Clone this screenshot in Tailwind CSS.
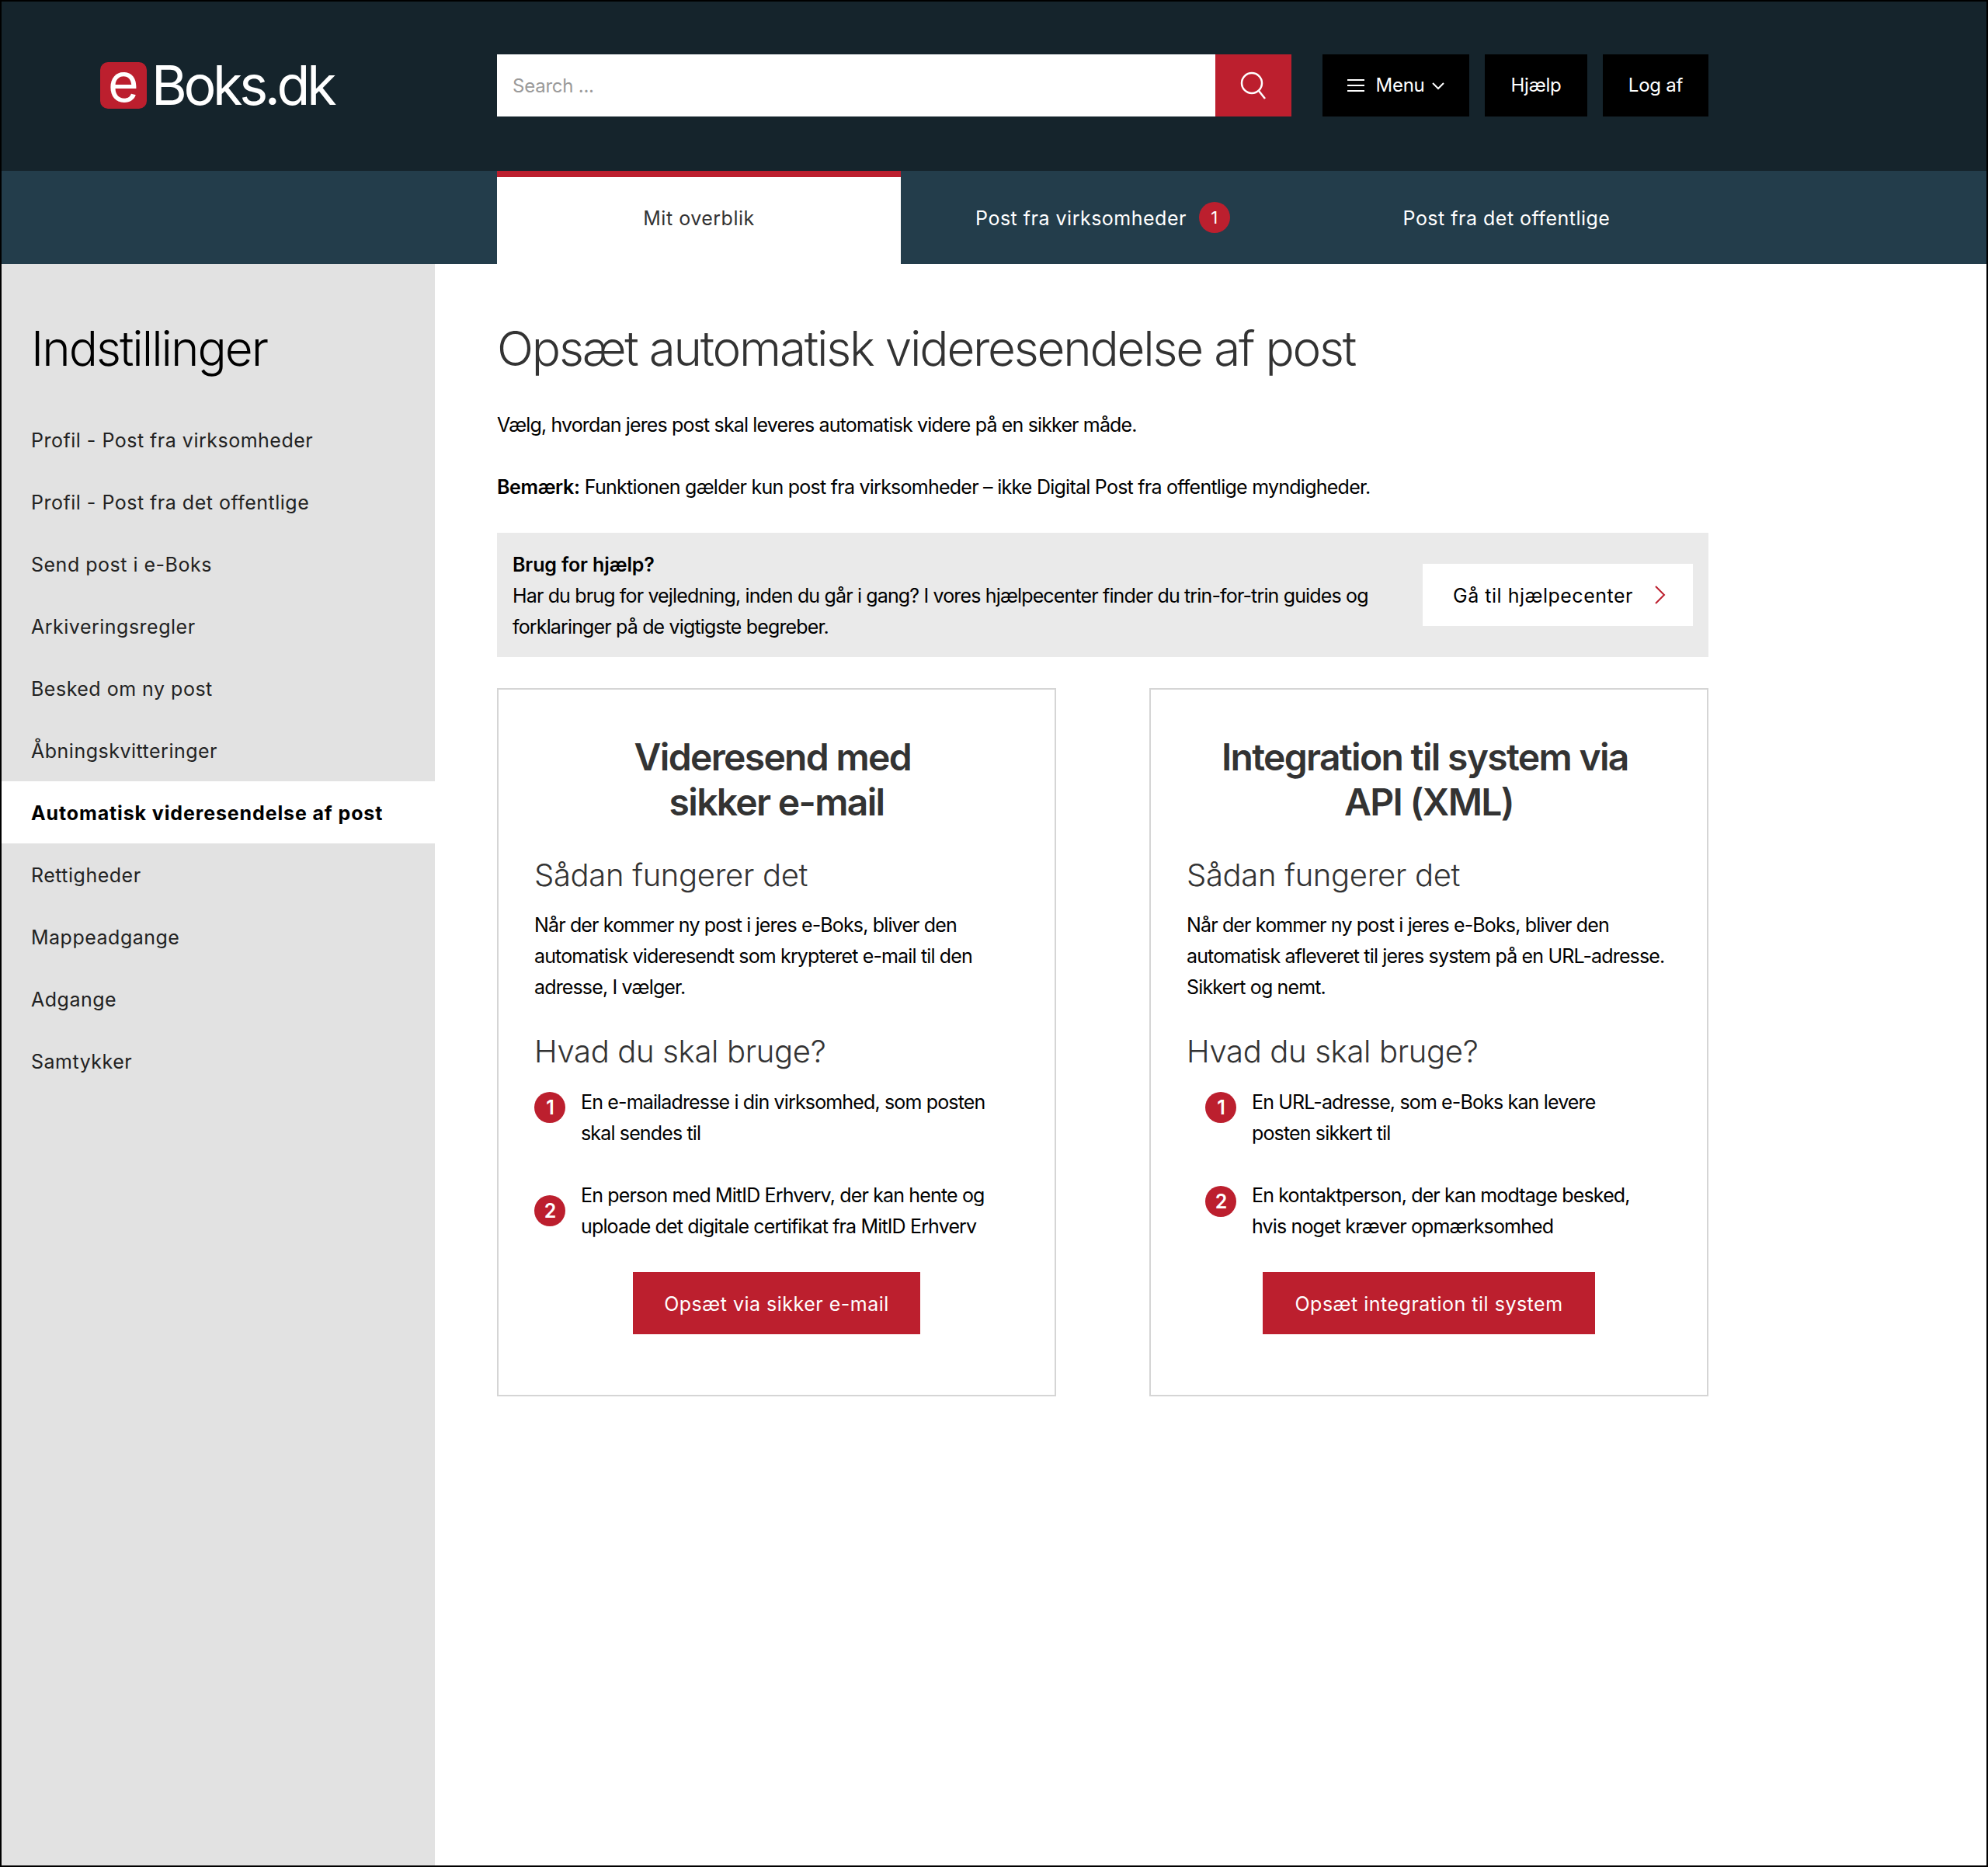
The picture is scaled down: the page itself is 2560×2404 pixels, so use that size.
<!DOCTYPE html>
<html lang="da">
<head>
  <meta charset="UTF-8" />
  <title>e-Boks.dk: Indstillinger</title>
  <script src="https://cdn.jsdelivr.net/npm/@tailwindcss/browser@4"></script>
</head>
<body class="font-[Inter,sans-serif] bg-white">
<div class="w-[2560px] h-[2404px] border-2 border-black flex flex-col overflow-hidden text-[25px] leading-[40px] tracking-[0.02em] text-black">

  <!-- Header -->
  <header class="h-[218px] shrink-0 bg-[#15242c] flex">
    <div class="w-[638px] shrink-0 pl-[127px] pt-[78px]">
      <div class="flex items-start">
        <div class="w-[60px] h-[60px] rounded-[10px] bg-[#bc1f2e] flex items-center justify-center text-white text-[68px] leading-[56px] font-normal pb-[8px]">e</div>
        <span class="ml-[6px] text-white text-[70px] leading-[60px] font-normal tracking-[-0.062em]">Boks.dk</span>
      </div>
    </div>
    <div class="pt-[68px] flex items-start h-[148px] text-[24px] tracking-[-0.01em]">
      <input type="text" placeholder="Search ..." class="w-[925px] h-[80px] bg-white px-[20px] text-[24px] placeholder:text-[#9a9a9a] outline-none">
      <button class="w-[98px] h-[80px] bg-[#bc1f2e] flex items-center justify-center">
        <svg width="34" height="36" viewBox="0 0 34 36" fill="none" stroke="white" stroke-width="2.5"><circle cx="15" cy="15" r="13"/><path d="M24 25l8 10"/></svg>
      </button>
      <button class="ml-[40px] w-[189px] h-[80px] bg-black text-white flex items-center justify-center">
        <svg width="22" height="16" viewBox="0 0 22 16" fill="none" stroke="white" stroke-width="2"><path d="M0 1h22M0 8h22M0 15h22"/></svg>
        <span class="ml-[14px]">Menu</span>
        <svg class="ml-[9px] mt-[2px]" width="16" height="10" viewBox="0 0 16 10" fill="none" stroke="white" stroke-width="2"><path d="M1 1l7 7 7-7"/></svg>
      </button>
      <button class="ml-[20px] w-[132px] h-[80px] bg-black text-white">Hjælp</button>
      <button class="ml-[20px] w-[136px] h-[80px] bg-black text-white">Log af</button>
    </div>
  </header>

  <!-- Tabs -->
  <nav class="h-[120px] shrink-0 bg-[#233d4b] flex pl-[638px] text-white">
    <a class="w-[520px] h-[120px] bg-white border-t-[8px] border-[#bc1f2e] text-[#333] flex items-center justify-center pb-[6px]">Mit overblik</a>
    <a class="w-[520px] flex items-center justify-center pt-[2px]">Post fra virksomheder
      <span class="ml-[16px] mb-[2px] w-[40px] h-[40px] rounded-full bg-[#bc1f2e] text-[22px] flex items-center justify-center">1</span>
    </a>
    <a class="w-[520px] flex items-center justify-center pt-[2px]">Post fra det offentlige</a>
  </nav>

  <div class="flex flex-1">
    <!-- Sidebar -->
    <aside class="w-[558px] shrink-0 bg-[#e2e2e2] pt-[69px]">
      <h2 class="pl-[38px] text-[62px] leading-[80px] font-[350] tracking-[-0.033em] text-black">Indstillinger</h2>
      <ul class="mt-[37px] text-[#222]">
        <li class="h-[80px] pl-[38px] pt-[2px] flex items-center">Profil - Post fra virksomheder</li>
        <li class="h-[80px] pl-[38px] pt-[2px] flex items-center">Profil - Post fra det offentlige</li>
        <li class="h-[80px] pl-[38px] pt-[2px] flex items-center">Send post i e-Boks</li>
        <li class="h-[80px] pl-[38px] pt-[2px] flex items-center">Arkiveringsregler</li>
        <li class="h-[80px] pl-[38px] pt-[2px] flex items-center">Besked om ny post</li>
        <li class="h-[80px] pl-[38px] pt-[2px] flex items-center">Åbningskvitteringer</li>
        <li class="h-[80px] pl-[38px] pt-[2px] flex items-center bg-white font-bold tracking-[0.035em] text-black">Automatisk videresendelse af post</li>
        <li class="h-[80px] pl-[38px] pt-[2px] flex items-center">Rettigheder</li>
        <li class="h-[80px] pl-[38px] pt-[2px] flex items-center">Mappeadgange</li>
        <li class="h-[80px] pl-[38px] pt-[2px] flex items-center">Adgange</li>
        <li class="h-[80px] pl-[38px] pt-[2px] flex items-center">Samtykker</li>
      </ul>
    </aside>

    <!-- Main -->
    <main class="pl-[80px] pt-[69px]">
      <div class="w-[1560px]">
        <h1 class="text-[62px] leading-[80px] font-[350] tracking-[-0.036em] text-[#333]">Opsæt automatisk videresendelse af post</h1>
        <p class="mt-[38px] tracking-[-0.034em]">Vælg, hvordan jeres post skal leveres automatisk videre på en sikker måde.</p>
        <p class="mt-[40px] tracking-[-0.03em]"><b class="font-semibold tracking-[-0.015em]">Bemærk:</b> Funktionen gælder kun post fra virksomheder – ikke Digital Post fra offentlige myndigheder.</p>

        <div class="mt-[39px] h-[160px] bg-[#eaeaea] px-[20px] flex items-center justify-between">
          <div class="w-[1140px] pt-[2px] tracking-[-0.034em]">
            <b class="block font-semibold tracking-[-0.005em]">Brug for hjælp?</b>
            Har du brug for vejledning, inden du går i gang? I vores hjælpecenter finder du trin-for-trin guides og forklaringer på de vigtigste begreber.
          </div>
          <a class="w-[348px] h-[80px] pt-[2px] pl-[4px] bg-white flex items-center justify-center">Gå til hjælpecenter
            <svg class="ml-[28px] mb-[2px]" width="14" height="24" viewBox="0 0 14 24" fill="none" stroke="#bc1f2e" stroke-width="2"><path d="M1 1l11 11L1 23"/></svg>
          </a>
        </div>

        <div class="mt-[40px] flex justify-between">
          <!-- Email card -->
          <section class="w-[720px] h-[912px] border-2 border-[#d5d5d5] px-[46px] pt-[58px]">
            <h3 class="text-center text-[48px] leading-[58px] font-semibold tracking-[-0.035em] text-[#333]">Videresend med&nbsp;<br>sikker e-mail</h3>
            <h4 class="mt-[37px] text-[40px] leading-[56px] font-[350] tracking-[-0.008em] text-[#333]">Sådan fungerer det</h4>
            <p class="mt-[16px] tracking-[-0.034em]">Når der kommer ny post i jeres e-Boks, bliver den automatisk videresendt som krypteret e-mail til den adresse, I vælger.</p>
            <h4 class="mt-[35px] text-[40px] leading-[56px] font-[350] tracking-[-0.008em] text-[#333]">Hvad du skal bruge?</h4>
            <ol class="mt-[17px] tracking-[-0.034em]">
              <li class="flex">
                <span class="mt-[7px] w-[40px] h-[40px] shrink-0 rounded-full bg-[#bc1f2e] text-white font-semibold flex items-center justify-center">1</span>
                <span class="ml-[20px]">En e-mailadresse i din virksomhed, som posten skal sendes til</span>
              </li>
              <li class="flex mt-[40px]">
                <span class="mt-[20px] w-[40px] h-[40px] shrink-0 rounded-full bg-[#bc1f2e] text-white font-semibold flex items-center justify-center">2</span>
                <span class="ml-[20px]">En person med MitID Erhverv, der kan hente og uploade det digitale certifikat fra MitID Erhverv</span>
              </li>
            </ol>
            <a class="mt-[39px] mx-auto w-[370px] h-[80px] pt-[2px] bg-[#bc1f2e] text-white flex items-center justify-center">Opsæt via sikker e-mail</a>
          </section>

          <!-- API card -->
          <section class="w-[720px] h-[912px] border-2 border-[#d5d5d5] px-[46px] pt-[58px]">
            <h3 class="text-center text-[48px] leading-[58px] font-semibold tracking-[-0.035em] text-[#333]">Integration til system via&nbsp;<br>API (XML)</h3>
            <h4 class="mt-[37px] text-[40px] leading-[56px] font-[350] tracking-[-0.008em] text-[#333]">Sådan fungerer det</h4>
            <p class="mt-[16px] tracking-[-0.034em]">Når der kommer ny post i jeres e-Boks, bliver den automatisk afleveret til jeres system på en URL-adresse. Sikkert og nemt.</p>
            <h4 class="mt-[35px] text-[40px] leading-[56px] font-[350] tracking-[-0.008em] text-[#333]">Hvad du skal bruge?</h4>
            <ol class="mt-[17px] pl-[24px] tracking-[-0.034em]">
              <li class="flex">
                <span class="mt-[7px] w-[40px] h-[40px] shrink-0 rounded-full bg-[#bc1f2e] text-white font-semibold flex items-center justify-center">1</span>
                <span class="ml-[20px] w-[500px]">En URL-adresse, som e-Boks kan levere posten sikkert til</span>
              </li>
              <li class="flex mt-[40px]">
                <span class="mt-[8px] w-[40px] h-[40px] shrink-0 rounded-full bg-[#bc1f2e] text-white font-semibold flex items-center justify-center">2</span>
                <span class="ml-[20px] w-[530px]">En kontaktperson, der kan modtage besked, hvis noget kræver opmærksomhed</span>
              </li>
            </ol>
            <a class="mt-[39px] mx-auto w-[428px] h-[80px] pt-[2px] bg-[#bc1f2e] text-white flex items-center justify-center">Opsæt integration til system</a>
          </section>
        </div>
      </div>
    </main>
  </div>
</div>
</body>
</html>
